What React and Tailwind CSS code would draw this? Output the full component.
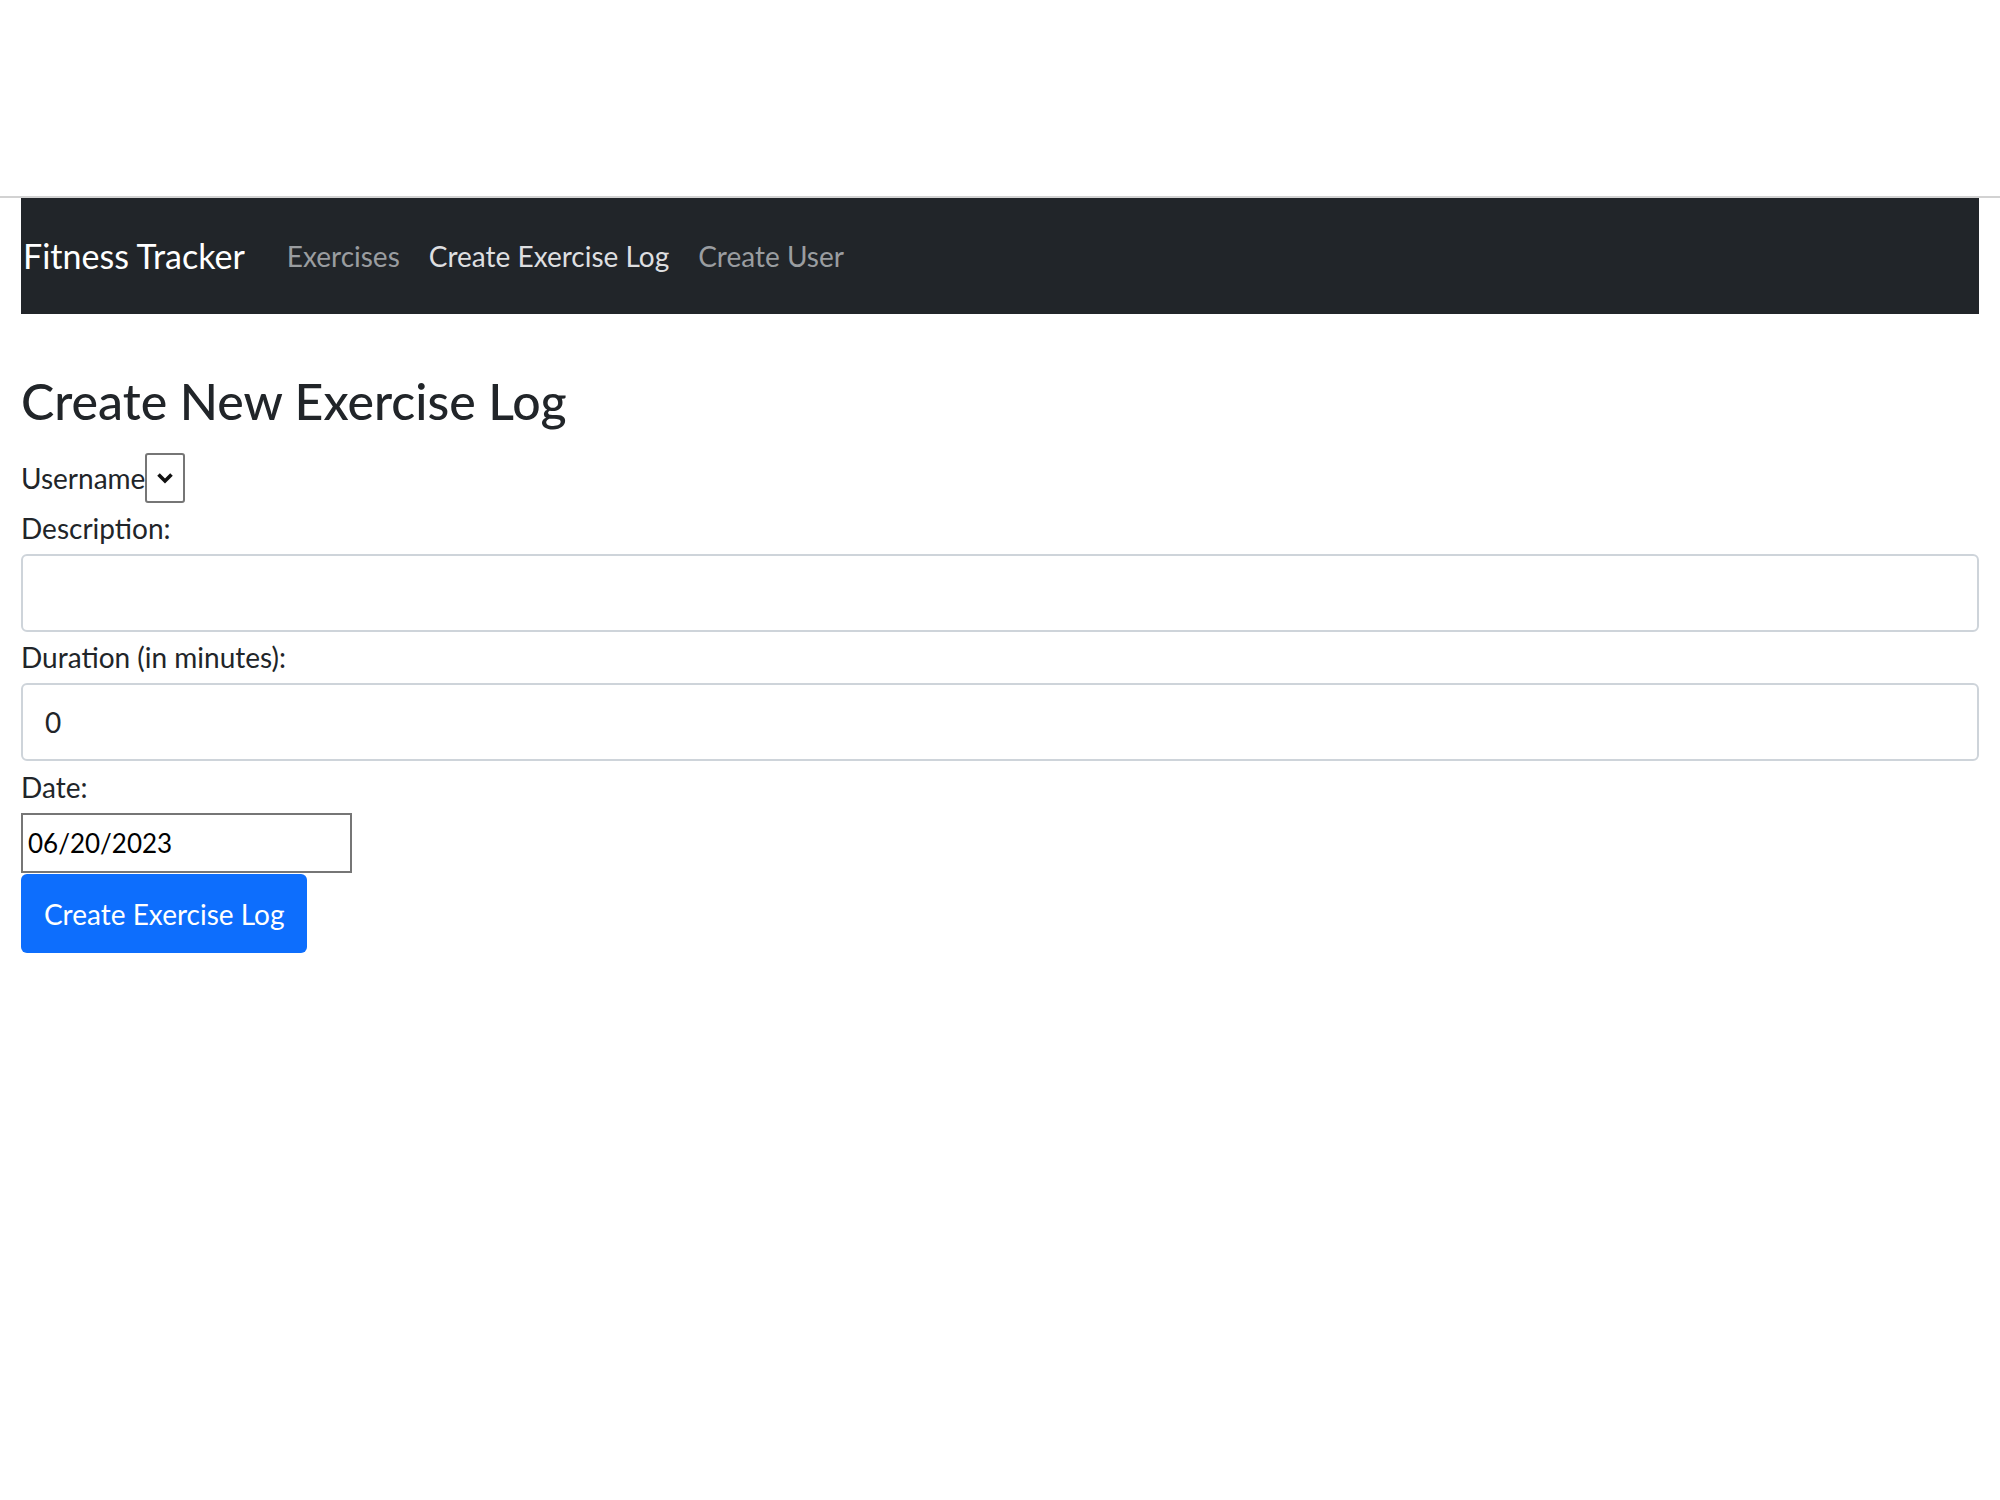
export default function App() {
    const links = [
        { label: 'Exercises', active: false },
        { label: 'Create Exercise Log', active: true },
        { label: 'Create User', active: false },
    ];

    return (
        <div className="min-h-screen bg-white pt-[196px] font-['Lato',_'Noto_Sans',_sans-serif] text-[#212529]">
            <div className="border-t-2 border-[#d2d2d2]">
                <div className="px-[21px]">
                    {/* Navbar */}
                    <nav className="flex h-[116px] items-center bg-[#212529]">
                        <span className="mr-[42px] pl-[2px] text-[34px] leading-none text-white">Fitness Tracker</span>
                        <div className="flex gap-[29px]">
                            {links.map((link) => (
                                <a
                                    key={link.label}
                                    className={`text-[28px] leading-none ${link.active ? 'text-[#dedfe0]' : 'text-[#9a9da0]'}`}
                                >
                                    {link.label}
                                </a>
                            ))}
                        </div>
                    </nav>

                    <h2 className="mt-[57px] mb-[22px] text-[50px] font-medium leading-[60px]">Create New Exercise Log</h2>

                    {/* Form */}
                    <form className="text-[28px]">
                        <div className="flex h-[50px] items-center">
                            <label className="leading-none">Username</label>
                            <div className="flex h-[50px] w-[40px] items-center justify-center rounded-[3px] border-2 border-[#767676] bg-white">
                                <svg width="18" height="14" viewBox="0 0 18 14" fill="none">
                                    <path d="M2.5 3.5l6.5 6.5 6.5-6.5" stroke="#111" strokeWidth="3.6" />
                                </svg>
                            </div>
                        </div>

                        <label className="block h-[51px] leading-[51px]">Description:</label>
                        <div className="h-[78px] rounded-[6px] border-2 border-[#ced4da] bg-white" />

                        <label className="block h-[51px] leading-[51px]">Duration (in minutes):</label>
                        <div className="flex h-[78px] items-center rounded-[6px] border-2 border-[#ced4da] bg-white pl-[22px]">
                            <span className="leading-none">0</span>
                        </div>

                        <label className="block h-[52px] leading-[52px]">Date:</label>
                        <div className="flex h-[60px] w-[331px] items-center border-2 border-[#767676] bg-white pl-[5px] text-[26px] text-black">
                            <span className="leading-none">06/20/2023</span>
                        </div>

                        <button
                            type="button"
                            className="mt-px h-[79px] rounded-[6px] bg-[#0d6efd] px-[23px] leading-none text-white"
                        >
                            Create Exercise Log
                        </button>
                    </form>
                </div>
            </div>
        </div>
    );
}
